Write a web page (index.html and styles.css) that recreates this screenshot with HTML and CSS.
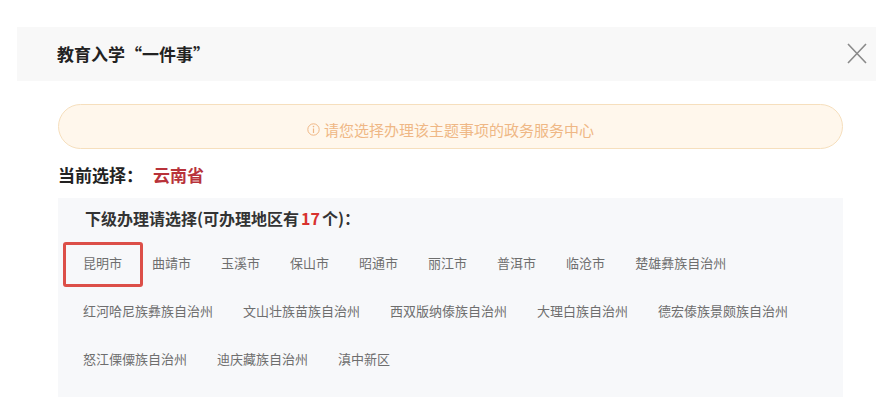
FILE: index.html
```html
<!DOCTYPE html>
<html lang="zh-CN">
<head>
  <meta charset="UTF-8" />
  <meta name="viewport" content="width=device-width, initial-scale=1.0" />
  <title>教育入学“一件事”</title>
  <link rel="stylesheet" href="styles.css">
</head>
<body>
  <div class="modal">
    <div class="modal-header">
      <h1>教育入学“一件事”</h1>
      <span class="close">
        <svg width="20" height="21" viewBox="0 0 20 21"><path d="M1 1 L19 20 M19 1 L1 20" stroke="#8a8a8a" stroke-width="1.6" fill="none"/></svg>
      </span>
    </div>
    <div class="modal-body">
      <div class="notice">
        <svg class="notice-icon" width="13" height="13" viewBox="0 0 13 13"><circle cx="6.5" cy="6.5" r="5.7" stroke="#efb785" stroke-width="1" fill="none"/><path d="M6.5 5.5 V10" stroke="#efb785" stroke-width="1.2"/><circle cx="6.5" cy="3.6" r="0.8" fill="#efb785"/></svg>
        <span>请您选择办理该主题事项的政务服务中心</span>
      </div>
      <div class="current">当前选择：<span class="current-name">云南省</span></div>
      <div class="area-box">
        <div class="area-title">下级办理请选择(可办理地区有<span class="count">17</span>个)：</div>
        <div class="area-list">
          <span class="area selected">昆明市</span>
          <span class="area">曲靖市</span>
          <span class="area">玉溪市</span>
          <span class="area">保山市</span>
          <span class="area">昭通市</span>
          <span class="area">丽江市</span>
          <span class="area">普洱市</span>
          <span class="area">临沧市</span>
          <span class="area">楚雄彝族自治州</span>
          <span class="area">红河哈尼族彝族自治州</span>
          <span class="area">文山壮族苗族自治州</span>
          <span class="area">西双版纳傣族自治州</span>
          <span class="area">大理白族自治州</span>
          <span class="area">德宏傣族景颇族自治州</span>
          <span class="area">怒江傈僳族自治州</span>
          <span class="area">迪庆藏族自治州</span>
          <span class="area">滇中新区</span>
        </div>
      </div>
    </div>
  </div>
</body>
</html>
```
FILE: styles.css
```css
body {
  margin: 0;
  padding: 0;
  font-family: "Noto Sans CJK SC", "Noto Sans", sans-serif;
  background-color: #fff;
  color: #333;
  width: 876px;
  height: 415px;
  overflow: hidden;
}
.modal {
  margin-left: 17px;
  padding-top: 27px;
}
.modal-header {
  height: 54px;
  background-color: #f8f8f8;
  display: flex;
  align-items: center;
  justify-content: space-between;
  padding: 0 9px 0 40px;
}
.modal-header h1 {
  margin: 0;
  font-size: 17px;
  font-weight: bold;
  color: #222;
  line-height: 24px;
}
.close {
  display: flex;
  margin-top: -2px;
}
.modal-body {
  width: 785px;
  margin-left: 41px;
}
.notice {
  margin-top: 23px;
  border: 1px solid #f6dfbd;
  border-radius: 23px;
  background-color: #fff7ec;
  display: flex;
  justify-content: center;
  align-items: center;
  padding-top: 6px;
  box-sizing: border-box;
  height: 45px;
  font-size: 15px;
  color: #efb785;
}
.notice-icon {
  margin-right: 4px;
}
.current {
  margin-top: 14px;
  font-size: 17px;
  font-weight: bold;
  line-height: 24px;
  color: #222;
}
.current-name {
  color: #b8323a;
  margin-left: 10px;
}
.area-box {
  margin-top: 11px;
  background-color: #f7f8fa;
  padding: 8px 0 14px;
}
.area-title {
  padding-left: 27px;
  font-size: 16px;
  font-weight: 600;
  line-height: 24px;
  color: #333;
}
.count {
  color: #d8322e;
  font-weight: bold;
  margin: 0 2px;
}
.area-list {
  margin-top: 9px;
  padding-left: 10px;
  display: flex;
  flex-wrap: wrap;
}
.area {
  position: relative;
  padding: 0 15px;
  font-size: 13px;
  line-height: 48px;
  color: #6e6e6e;
  white-space: nowrap;
  cursor: pointer;
}
.area.selected::after {
  content: "";
  position: absolute;
  left: -5px;
  right: -6px;
  top: 3px;
  bottom: 0;
  border: 3px solid #dc4f48;
  border-radius: 3px;
}
```
